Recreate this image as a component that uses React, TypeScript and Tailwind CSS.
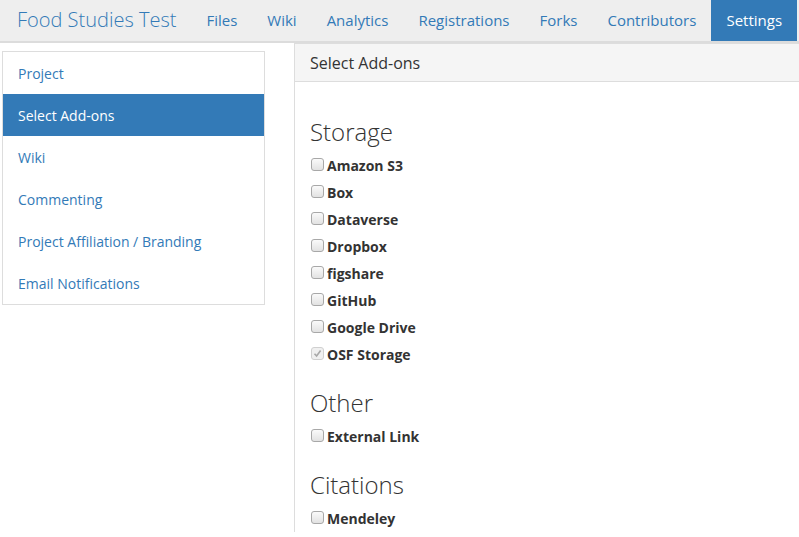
import React from 'react';

const navItems = ['Files', 'Wiki', 'Analytics', 'Registrations', 'Forks', 'Contributors', 'Settings'];
const sideItems = ['Project', 'Select Add-ons', 'Wiki', 'Commenting', 'Project Affiliation / Branding', 'Email Notifications'];

const sections = [
  {
    title: 'Storage',
    addons: [
      { name: 'Amazon S3' },
      { name: 'Box' },
      { name: 'Dataverse' },
      { name: 'Dropbox' },
      { name: 'figshare' },
      { name: 'GitHub' },
      { name: 'Google Drive' },
      { name: 'OSF Storage', locked: true },
    ],
  },
  { title: 'Other', addons: [{ name: 'External Link' }] },
  { title: 'Citations', addons: [{ name: 'Mendeley' }] },
];

const Check: React.FC<{ checked?: boolean }> = ({ checked }) =>
  checked ? (
    <span className="block shrink-0 w-[13px] h-[13px] rounded-[3px] border border-[#d0d0d0] bg-[#f0f0f0] flex items-center justify-center -mt-[3px]">
      <svg width="9" height="9" viewBox="0 0 9 9">
        <path d="M1.5 4.8 L3.6 7 L7.6 1.6" fill="none" stroke="#a8a8a8" strokeWidth="1.6" />
      </svg>
    </span>
  ) : (
    <span className="block shrink-0 w-[13px] h-[13px] rounded-[3px] border border-[#a8a8a8] bg-gradient-to-b from-[#fafafa] to-[#e2e2e2] -mt-[3px]" />
  );

const App: React.FC = () => {
  return (
    <div className="h-[537px] overflow-hidden bg-white text-[#333] font-['Open_Sans',sans-serif]">
      {/* top project nav */}
      <div className="flex h-[43px] items-stretch bg-[#eeeeee] border-b-2 border-[#dcdcdc]">
        <div className="flex items-center pl-[17px] pr-[15px] pb-[1px] text-[20px] font-light text-[#337ab7]">
          Food Studies Test
        </div>
        <div className="flex items-stretch">
          {navItems.map(item => (
            <div
              key={item}
              className={`flex items-center px-[15px] pb-[1px] text-[15px] ${
                item === 'Settings' ? 'bg-[#337ab7] text-white' : 'text-[#337ab7]'
              }`}
            >
              {item}
            </div>
          ))}
        </div>
      </div>

      <div className="flex">
        {/* side menu */}
        <div className="w-[265px] pl-[2px] pt-[8px] shrink-0">
          <div className="border border-[#dddddd] bg-white">
            {sideItems.map(item => (
              <div
                key={item}
                className={`h-[42px] flex items-center pl-[15px] text-[14px] ${
                  item === 'Select Add-ons' ? 'bg-[#337ab7] text-white' : 'text-[#337ab7]'
                }`}
              >
                {item}
              </div>
            ))}
          </div>
        </div>

        {/* add-on panel */}
        <div className="ml-[29px] flex-1 border-l border-t border-[#dddddd] -mr-[4px]">
          <div className="h-[38px] flex items-center pl-[15px] bg-[#f5f5f5] border-b border-[#dddddd] text-[16px]">
            Select Add-ons
          </div>
          <div className="pl-[15px] pt-[37px] flex flex-col gap-[22px]">
            {sections.map(section => (
              <div key={section.title}>
                <h3 className="h-[26px] leading-[26px] text-[24px] font-light mb-[7px]">{section.title}</h3>
                <div className="flex flex-col">
                  {section.addons.map(addon => (
                    <div key={addon.name} className="h-[27px] flex items-center gap-[3px] pl-[1px]">
                      <Check checked={addon.locked} />
                      <span className="text-[14px] font-bold">{addon.name}</span>
                    </div>
                  ))}
                </div>
              </div>
            ))}
          </div>
        </div>
      </div>
    </div>
  );
};

export default App;
